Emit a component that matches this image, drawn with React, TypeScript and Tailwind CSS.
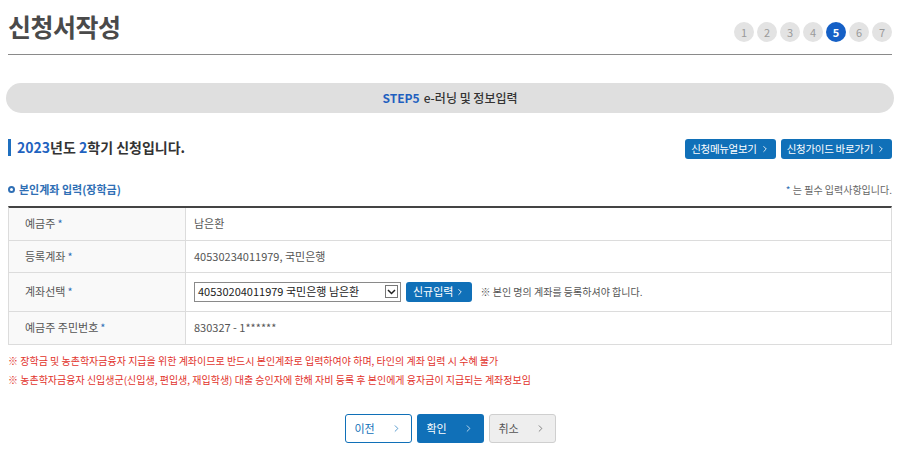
import { ChevronRight } from 'lucide-react';

const font = { fontFamily: '"Noto Sans CJK KR", "Noto Sans", sans-serif' };

const steps = [1, 2, 3, 4, 5, 6, 7];

const Star = () => <span className="ml-[2px] text-[#2f6fb5]">*</span>;

const Row = ({ label, children, h }: { label: string; children: React.ReactNode; h: string }) => (
  <div className={`flex border-b border-[#dcdcdc] ${h}`}>
    <div className="flex w-[177px] shrink-0 items-center border-r border-[#dcdcdc] bg-[#f9f9f9] pl-[16px] text-[11px] text-[#555]">
      {label}
      <Star />
    </div>
    <div className="flex flex-1 items-center pl-[8px] text-[11px] text-[#555]">{children}</div>
  </div>
);

const App = () => {
  return (
    <main className="h-[449px] w-[900px] overflow-hidden bg-white px-[8px]" style={font}>
      <div className="flex items-end justify-between border-b border-[#8a8a8a] pb-[11px] pt-[9px]">
        <h1 className="text-[25px] font-bold leading-[34px] tracking-[-0.5px] text-[#4a4a4a]">신청서작성</h1>
        <div className="flex gap-[3px] pb-[1px]">
          {steps.map((s) => (
            <div
              key={s}
              className={`flex h-[20px] w-[20px] items-center justify-center rounded-full text-[11px] ${
                s === 5 ? 'bg-[#1560c6] font-bold text-white' : 'bg-[#e3e3e3] text-[#9a9a9a]'
              }`}
            >
              {s}
            </div>
          ))}
        </div>
      </div>

      <div className="-mx-[2px] mt-[28px] flex h-[30px] items-center justify-center rounded-full bg-[#dfdfdf] text-[12px] text-[#333]">
        <span className="mr-[4px] font-bold text-[#1f5fbf]">STEP5</span>
        <span className="font-medium">e-러닝 및 정보입력</span>
      </div>

      <div className="mt-[24px] flex items-center justify-between">
        <div className="flex items-center pb-[3px]">
          <span className="mr-[6px] h-[17px] w-[3px] bg-[#1f6fbf]" />
          <span className="text-[14px] font-bold text-[#333]">
            <span className="text-[#1f63c0]">2023</span>년도 <span className="text-[#1f63c0]">2</span>학기 신청입니다.
          </span>
        </div>
        <div className="flex gap-[5px]">
          <button className="flex h-[20px] items-center rounded-[3px] bg-[#1070b8] px-[6px] text-[10.5px] tracking-[-0.3px] text-white">
            신청메뉴얼보기 <ChevronRight className="ml-[3px] h-[10px] w-[10px]" strokeWidth={2} />
          </button>
          <button className="flex h-[20px] items-center rounded-[3px] bg-[#1070b8] px-[6px] text-[10.5px] tracking-[-0.3px] text-white">
            신청가이드 바로가기 <ChevronRight className="ml-[3px] h-[10px] w-[10px]" strokeWidth={2} />
          </button>
        </div>
      </div>

      <div className="mt-[20px] flex items-center justify-between">
        <div className="flex items-center text-[11px] font-bold text-[#2f6fb5]">
          <span className="mr-[4px] h-[7px] w-[7px] rounded-full border-[2px] border-[#2f6fb5]" />
          본인계좌 입력(장학금)
        </div>
        <div className="text-[10px] text-[#666]">
          <span className="text-[#2f6fb5]">*</span> 는 필수 입력사항입니다.
        </div>
      </div>

      <div className="mt-[8px] border-t-[2px] border-[#444] border-x border-x-[#dcdcdc]">
        <Row label="예금주" h="h-[33px]">남은환</Row>
        <Row label="등록계좌" h="h-[32px]">40530234011979, 국민은행</Row>
        <Row label="계좌선택" h="h-[39px]">
          <div className="flex items-center">
            <div className="flex h-[20px] w-[207px] items-center justify-between border border-[#8a8a8a] pl-[3px] pr-[2px] text-[11px] text-[#222]">
              40530204011979 국민은행 남은환
              <span className="flex h-[13px] w-[13px] items-center justify-center border border-[#777]">
                <svg width="9" height="6" viewBox="0 0 9 6">
                  <path d="M1 1l3.5 3.5L8 1" fill="none" stroke="#222" strokeWidth="1.5" />
                </svg>
              </span>
            </div>
            <button className="ml-[5px] flex h-[20px] items-center rounded-[3px] bg-[#1070b8] px-[7px] text-[11px] text-white">
              신규입력 <ChevronRight className="ml-[2px] h-[10px] w-[10px]" strokeWidth={2} />
            </button>
            <span className="ml-[8px] text-[10px] text-[#555]">※ 본인 명의 계좌를 등록하셔야 합니다.</span>
          </div>
        </Row>
        <Row label="예금주 주민번호" h="h-[33px]">830327 - 1******</Row>
      </div>

      <div className="mt-[8px] space-y-[3px] text-[10px] leading-[16px] text-[#e2332c]">
        <p>※ 장학금 및 농촌학자금융자 지급을 위한 계좌이므로 반드시 본인계좌로 입력하여야 하며, 타인의 계좌 입력 시 수혜 불가</p>
        <p>※ 농촌학자금융자 신입생군(신입생, 편입생, 재입학생) 대출 승인자에 한해 자비 등록 후 본인에게 융자금이 지급되는 계좌정보임</p>
      </div>

      <div className="mt-[26px] flex justify-center gap-[5px]">
        <button className="flex h-[29px] w-[67px] items-center justify-center gap-[16px] rounded-[3px] border border-[#1070b8] bg-white text-[11px] text-[#1070b8]">
          이전 <ChevronRight className="h-[11px] w-[11px]" strokeWidth={1.5} />
        </button>
        <button className="flex h-[29px] w-[67px] items-center justify-center gap-[16px] rounded-[3px] bg-[#1070b8] text-[11px] text-white">
          확인 <ChevronRight className="h-[11px] w-[11px]" strokeWidth={1.5} />
        </button>
        <button className="flex h-[29px] w-[67px] items-center justify-center gap-[16px] rounded-[3px] border border-[#cfcfcf] bg-[#eeeeee] text-[11px] text-[#555]">
          취소 <ChevronRight className="h-[11px] w-[11px]" strokeWidth={1.5} />
        </button>
      </div>
    </main>
  );
};

export default App;
